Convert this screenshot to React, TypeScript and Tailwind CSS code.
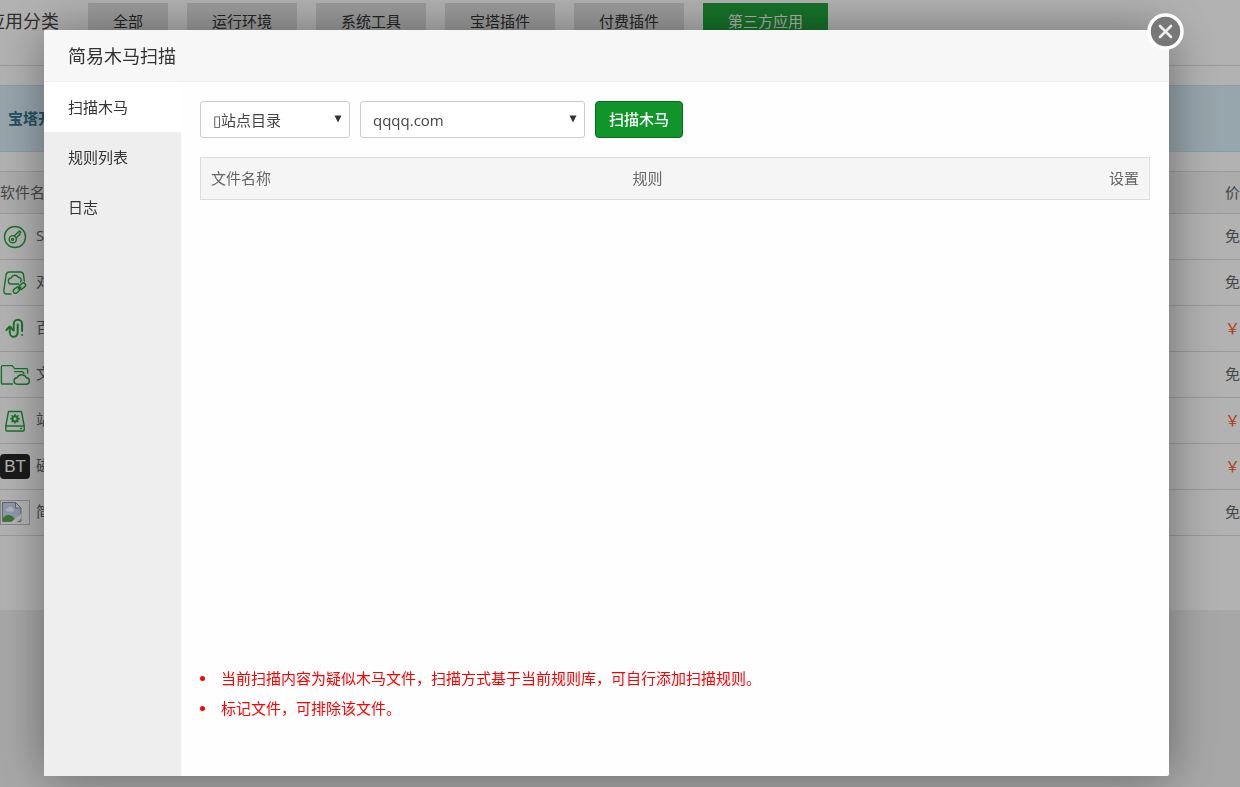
import type { ReactNode } from "react";

const categories = ["全部", "运行环境", "系统工具", "宝塔插件", "付费插件", "第三方应用"];

const menuItems = ["扫描木马", "规则列表", "日志"];

const notes = [
  "当前扫描内容为疑似木马文件，扫描方式基于当前规则库，可自行添加扫描规则。",
  "标记文件，可排除该文件。",
];

function LineIcon({ children }: { children: ReactNode }) {
  return (
    <svg
      width="30"
      height="26"
      viewBox="0 0 30 26"
      fill="none"
      stroke="#20a53a"
      strokeWidth="1.4"
      strokeLinecap="round"
      strokeLinejoin="round"
      aria-hidden="true"
    >
      {children}
    </svg>
  );
}

function KeyIcon() {
  return (
    <LineIcon>
      <circle cx="15" cy="13" r="10.5" />
      <circle cx="12.8" cy="15.2" r="3.6" />
      <circle cx="12.6" cy="15.4" r="1" />
      <path d="M14.2 12 19.4 7l1.4 1.3-1.6 1.4.8.9-1.8 1.2-2 2.3" />
    </LineIcon>
  );
}

function CloudLinkIcon() {
  return (
    <LineIcon>
      <path d="M11 24H6.6a2.8 2.8 0 0 1-2.8-3.3L6 5.2A3.6 3.6 0 0 1 9.6 2h10.5c2 0 3.2 1.2 3.5 3l.7 6" />
      <path d="M18.5 14H11.5a3 3 0 0 1-.3-6 3.8 3.8 0 0 1 7-.8 2.8 2.8 0 0 1 2.3 4.6" />
      <rect x="13" y="18" width="7" height="4.4" rx="2.2" transform="rotate(-40 16.5 20.2)" />
      <rect x="18.8" y="13.8" width="7" height="4.4" rx="2.2" transform="rotate(-40 22.3 16)" />
      <path d="m18 19 3-2" />
    </LineIcon>
  );
}

function HookIcon() {
  return (
    <LineIcon>
      <g strokeWidth="2">
        <path d="M9.8 11v4.500a3.900 4.500 0 0 0 7.900 1.500V8.500" />
        <path d="M13.700 14.500V8a4.200 4.200 0 0 1 8.400 0v7" />
        <path d="m6.400 14 3.400-3.500 3.400 3.500" />
        <path d="M22.100 19v.1" />
      </g>
    </LineIcon>
  );
}

function FolderCloudIcon() {
  return (
    <LineIcon>
      <path d="M12.5 22H2.6A1.2 1.2 0 0 1 1.4 20.8V4.8A1.2 1.2 0 0 1 2.6 3.6h9.6l2.4 3h11.8a1.2 1.2 0 0 1 1.2 1.2V11" />
      <path d="M14.5 9.6h7.8l1.6 1.6" />
      <path d="M17.3 22.2a3.2 3.2 0 0 1-.2-6.4 5 5 0 0 1 9.2 0 3.2 3.2 0 0 1-.2 6.4Z" />
    </LineIcon>
  );
}

function DiskIcon() {
  return (
    <LineIcon>
      <path d="M8.5 3.5h13l2.7 14.5v4a1 1 0 0 1-1 1H6.8a1 1 0 0 1-1-1v-4Z" />
      <path d="M6 18h18M20.5 20.5h1" />
      <circle cx="15" cy="10.8" r="2.6" strokeWidth="2" />
      <path d="M15 6.5v1M15 14.1v1M10.7 10.8h1M18.3 10.8h1M12 7.8l.6.6M17.4 13.2l.6.6M18 7.8l-.6.6M12.6 13.2l-.6.6" />
    </LineIcon>
  );
}

function BtIcon() {
  return (
    <span className="flex h-[25px] w-[30px] items-center justify-center rounded bg-[#262626] font-['Liberation_Sans'] text-[17px] leading-none text-white">
      BT
    </span>
  );
}

function BrokenImageIcon() {
  return (
    <svg width="30" height="26" viewBox="0 0 30 26" aria-hidden="true">
      <rect x="0.5" y="0.5" width="29" height="24" fill="none" stroke="#c0c0c0" />
      <path d="M2.5 2.5h13l5.5 5.5v13.5H2.5Z" fill="#c6dafa" stroke="#8b8f94" />
      <path d="M6 10.5a2 2 0 0 1 2-2.5 2.8 2.8 0 0 1 5 .5 1.6 1.6 0 0 1 0 3H7Z" fill="#fff" />
      <path d="M3 21v-3c3-4 8-4 11 0l2 3Z" fill="#4fa93a" />
      <path d="m11 22 10.5-8.5V18L17 22Z" fill="#fff" />
      <path d="M15.5 2.5V8H21Z" fill="#fff" stroke="#8b8f94" />
    </svg>
  );
}

const apps = [
  { name: "SSH", icon: <KeyIcon />, free: true },
  { name: "对象存储", icon: <CloudLinkIcon />, free: true },
  { name: "百度推送", icon: <HookIcon />, free: false },
  { name: "文件同步", icon: <FolderCloudIcon />, free: true },
  { name: "站点备份", icon: <DiskIcon />, free: false },
  { name: "磁力下载", icon: <BtIcon />, free: false },
  { name: "简易木马扫描", icon: <BrokenImageIcon />, free: true },
];

function SoftwarePage() {
  return (
    <div className="h-screen overflow-hidden bg-[#f0f0f0]" aria-hidden="true">
      <div className="bg-white pb-[74px]">
        <div className="flex h-[66px] gap-[29px] border-b border-[#ddd] pt-[3px]">
          <h2 className="-ml-[13px] shrink-0 text-lg leading-9 text-[#444]">应用分类</h2>
          <div className="flex items-start gap-[19px]">
            {categories.map((label, index) => (
              <button
                key={label}
                type="button"
                tabIndex={-1}
                className={`h-9 px-[25px] whitespace-nowrap ${
                  index === categories.length - 1 ? "bg-[#20a53a] text-white" : "bg-[#e0e0e0] text-[#333]"
                }`}
              >
                {label}
              </button>
            ))}
          </div>
        </div>

        <div className="mt-[19px] flex h-[67px] items-center border-y border-[#bce8f1] bg-[#d9edf7] pl-2 font-bold text-[#31708f]">
          宝塔开发者
        </div>

        <table className="mt-[19px] w-full table-fixed border-collapse text-left whitespace-nowrap text-[#666]">
          <thead>
            <tr className="h-[42px] border-y border-[#ddd] bg-[#f6f6f6]">
              <th className="font-normal">软件名称</th>
              <th className="w-[15px] font-normal">价格</th>
            </tr>
          </thead>
          <tbody>
            {apps.map((app) => (
              <tr key={app.name} className="h-[46px] border-b border-[#ddd]">
                <td>
                  <div className="flex items-center gap-1.5">
                    {app.icon}
                    <span className="pb-[3px]">{app.name}</span>
                  </div>
                </td>
                <td className={app.free ? "" : "text-[#fc5a1c]"}>{app.free ? "免费" : "￥"}</td>
              </tr>
            ))}
          </tbody>
        </table>
      </div>
    </div>
  );
}

function SelectBox({ label, options, className }: { label: string; options: string[]; className: string }) {
  return (
    <div className={`relative ${className}`}>
      <select
        aria-label={label}
        className="h-[37px] w-full appearance-none rounded-[3px] border border-[#ccc] bg-white pt-0.5 pl-3 text-[#444]"
      >
        {options.map((option) => (
          <option key={option}>{option}</option>
        ))}
      </select>
      <svg className="pointer-events-none absolute top-3.5 right-2" width="8" height="8" viewBox="0 0 8 8" aria-hidden="true">
        <path d="M0.5 0.5h7L4 7.5Z" fill="#333" />
      </svg>
    </div>
  );
}

function ScanDialog() {
  return (
    <div
      role="dialog"
      aria-labelledby="dialog-title"
      className="relative flex flex-1 flex-col rounded-xs bg-[#fefefe] shadow-[1px_1px_50px_rgba(0,0,0,0.4)]"
    >
      <header className="flex h-[52px] shrink-0 items-center rounded-t-xs border-b border-[#eee] bg-[#f7f7f7] pl-6">
        <h1 id="dialog-title" className="text-lg text-[#333]">
          简易木马扫描
        </h1>
      </header>

      <div className="flex flex-1">
        <nav className="w-[137px] shrink-0 bg-[#eee]">
          {menuItems.map((item, index) => (
            <a
              key={item}
              href="#"
              className={`block h-[50px] pl-6 leading-[50px] text-[#333] ${index === 0 ? "bg-white" : ""}`}
            >
              {item}
            </a>
          ))}
        </nav>

        <main className="flex flex-1 flex-col px-[19px] pt-[19px] pb-[53px]">
          <div className="flex gap-2.5">
            <SelectBox label="目录类型" options={["▯站点目录"]} className="w-[150px]" />
            <SelectBox label="站点" options={["qqqq.com"]} className="w-[225px]" />
            <button
              type="button"
              className="h-[37px] w-[88px] rounded border border-[#0a6b1c] bg-[#10952a] font-medium text-white"
            >
              扫描木马
            </button>
          </div>

          <table className="mt-[19px] w-full table-fixed border-collapse border border-[#ddd] text-[#666]">
            <thead>
              <tr className="h-[42px] bg-[#f5f5f5]">
                <th className="pl-2.5 text-left font-normal">文件名称</th>
                <th className="pl-2.5 text-left font-normal">规则</th>
                <th className="w-[105px] pr-2.5 text-right font-normal">设置</th>
              </tr>
            </thead>
          </table>

          <ul className="mt-auto leading-[30px] text-[#f00]">
            {notes.map((note) => (
              <li key={note} className="flex items-center gap-4 before:size-[5px] before:rounded-full before:bg-[#f00]">
                {note}
              </li>
            ))}
          </ul>
        </main>
      </div>

      <button type="button" aria-label="关闭" className="absolute -top-[17px] -right-4 rounded-full">
        <svg width="38" height="38" viewBox="0 0 38 38" fill="none" aria-hidden="true">
          <circle cx="18.5" cy="18.5" r="16.5" fill="#787878" stroke="#fff" strokeWidth="3.5" />
          <path d="m13 13 11 11M24 13 13 24" stroke="#eee" strokeWidth="2.6" strokeLinecap="round" />
        </svg>
      </button>
    </div>
  );
}

export default function App() {
  return (
    <div className="font-['Open_Sans','Noto_Sans_CJK_SC',sans-serif] text-[15px]" lang="zh-CN">
      <SoftwarePage />
      <div className="fixed inset-0 flex bg-black/30 pt-[30px] pr-[71px] pb-[11px] pl-11">
        <ScanDialog />
      </div>
    </div>
  );
}
